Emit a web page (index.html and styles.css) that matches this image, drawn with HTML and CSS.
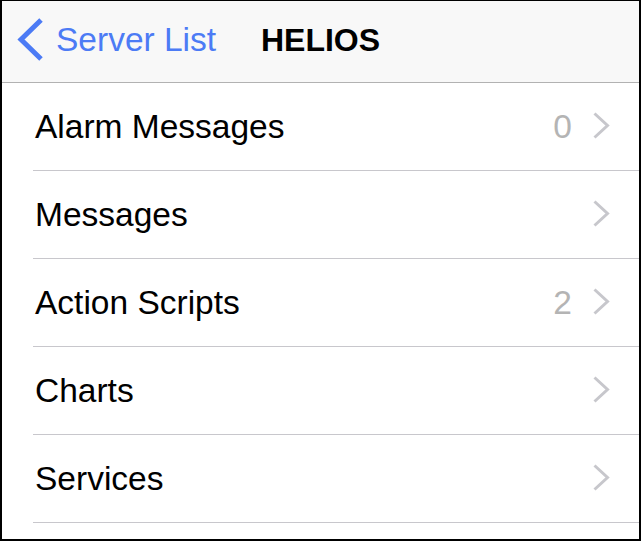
FILE: index.html
```html
<!DOCTYPE html>
<html lang="en">
<head>
  <meta charset="UTF-8">
  <title>HELIOS</title>
  <link rel="stylesheet" href="styles.css">
</head>
<body>
  <div class="screen">
    <div class="navbar">
      <a class="back" href="#">
        <svg class="back-icon" width="30" height="44" viewBox="0 0 30 44">
          <path d="M25 2 L5 21.5 L25 41" fill="none" stroke="#4c7bf5" stroke-width="5"/>
        </svg>
        <span>Server List</span>
      </a>
      <h1 class="title">HELIOS</h1>
      <div></div>
    </div>

    <ul class="list">
      <li class="row">
        <span class="label">Alarm Messages</span>
        <span class="count">0</span>
        <svg class="chev" width="17" height="27" viewBox="0 0 17 27"><path d="M1.5 1.5 L14.5 13.5 L1.5 25.5" /></svg>
      </li>
      <li class="row">
        <span class="label">Messages</span>
        <svg class="chev" width="17" height="27" viewBox="0 0 17 27"><path d="M1.5 1.5 L14.5 13.5 L1.5 25.5" /></svg>
      </li>
      <li class="row">
        <span class="label">Action Scripts</span>
        <span class="count">2</span>
        <svg class="chev" width="17" height="27" viewBox="0 0 17 27"><path d="M1.5 1.5 L14.5 13.5 L1.5 25.5" /></svg>
      </li>
      <li class="row">
        <span class="label">Charts</span>
        <svg class="chev" width="17" height="27" viewBox="0 0 17 27"><path d="M1.5 1.5 L14.5 13.5 L1.5 25.5" /></svg>
      </li>
      <li class="row">
        <span class="label">Services</span>
        <svg class="chev" width="17" height="27" viewBox="0 0 17 27"><path d="M1.5 1.5 L14.5 13.5 L1.5 25.5" /></svg>
      </li>
    </ul>
  </div>
</body>
</html>
```

FILE: styles.css
```css
html, body { margin: 0; padding: 0; }
body { font-family: "Liberation Sans", Arial, sans-serif; background: #fff; }

.screen { width: 641px; height: 541px; box-sizing: border-box; border: solid #000; border-width: 1px 2px 2px 2px; overflow: hidden; background: #fff; }

.navbar { height: 81px; background: #f8f8f8; border-bottom: 1px solid #b2b2b2; display: grid; grid-template-columns: 1fr auto 1fr; align-items: center; }
.back { display: flex; align-items: center; gap: 10px; padding-left: 14px; color: #4c7bf5; text-decoration: none; font-size: 33.5px; margin-top: -4px; }
.back-icon { display: block; }
.title { margin: 0; font-size: 32px; font-weight: bold; color: #000; margin-top: -3px; }

.list { list-style: none; margin: 0; padding: 0; }
.row { height: 87px; margin-left: 31px; padding: 0 29px 0 2px; border-bottom: 1px solid #c8c7cc; display: flex; align-items: center; font-size: 33.5px; color: #000; }
.label { flex: 1; }
.count { color: #b4b4b4; margin-right: 21px; }
.chev { display: block; margin-top: -2px; }
.chev path { fill: none; stroke: #c7c7cc; stroke-width: 3; }
```
